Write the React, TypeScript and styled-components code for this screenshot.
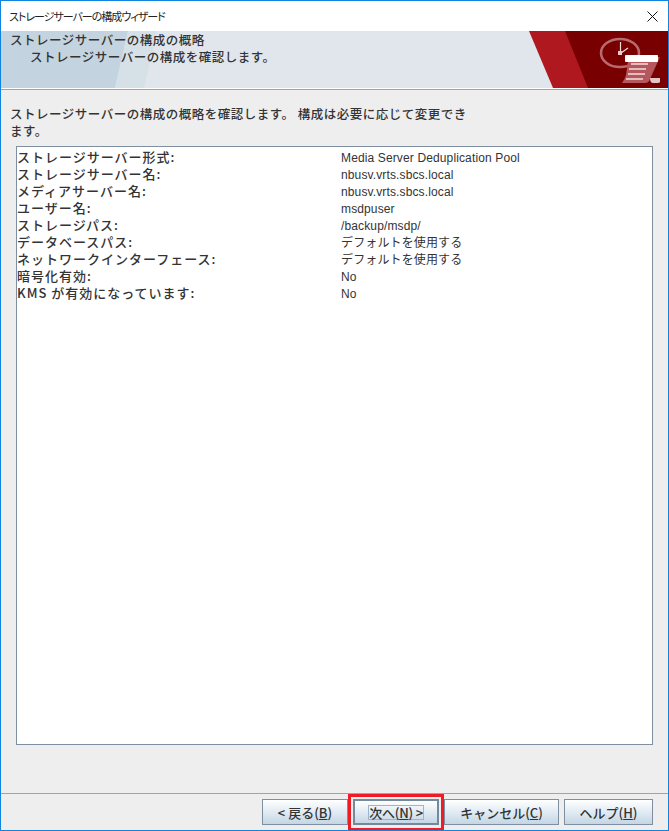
import React from "react";
import styled, { createGlobalStyle } from "styled-components";

const GlobalStyle = createGlobalStyle`
  html, body {
    margin: 0;
    padding: 0;
    background: #eeeeee;
  }
`;

const jp = `"Noto Sans CJK JP", "Noto Sans", sans-serif`;
const latin = `"Liberation Sans", "Noto Sans CJK JP", sans-serif`;

const Window = styled.div`
  width: 669px;
  height: 831px;
  box-sizing: border-box;
  border: 1px solid #0f84e0;
  background: #eeeeee;
  display: flex;
  flex-direction: column;
  overflow: hidden;
  color: #333333;
`;

const TitleBar = styled.div`
  height: 30px;
  flex: none;
  background: #ffffff;
  display: flex;
  align-items: center;
  justify-content: space-between;
  padding: 0 8px;
  box-sizing: border-box;
`;

const TitleText = styled.span`
  font: 400 11px ${jp};
  font-feature-settings: "palt";
  letter-spacing: -1px;
  color: #222222;
`;

const CloseIcon = styled.svg`
  width: 11px;
  height: 11px;
  margin-right: 2px;
  display: block;
`;

const Banner = styled.div`
  position: relative;
  height: 57px;
  flex: none;
  background: #e0e6eb;
  border-bottom: 1px solid #ffffff;
  box-sizing: content-box;
`;

const BannerArt = styled.svg`
  position: absolute;
  inset: 0;
  width: 667px;
  height: 57px;
  display: block;
`;

const BannerText = styled.div`
  position: relative;
  padding: 0 0 0 9px;
  font: 500 12.5px/17px ${jp};
  letter-spacing: 0.5px;
  color: #333333;
`;

const BannerSub = styled.div`
  padding-left: 20px;
`;

const Rule = styled.div`
  height: 1px;
  flex: none;
  background: #a3a3a3;
`;

const Content = styled.div`
  flex: 1;
  min-height: 0;
  display: flex;
  flex-direction: column;
  padding: 15px 15px 48px 15px;
`;

const Intro = styled.p`
  margin: 0 0 7px -6px;
  font: 500 12.5px/17px ${jp};
  letter-spacing: 0.5px;
`;

const SummaryBox = styled.div`
  flex: 1;
  min-height: 0;
  background: #ffffff;
  border: 1px solid #7d8fa1;
  padding-top: 1px;
`;

const Row = styled.div`
  display: grid;
  grid-template-columns: 324px 1fr;
  height: 17px;
  align-items: center;
`;

const Label = styled.span`
  padding-bottom: 2px;
  font: 500 13px/17px ${jp};
  letter-spacing: 1px;
  color: #333333;
`;

const Value = styled.span`
  padding-top: 2px;
  font: 400 12px/17px ${latin};
  letter-spacing: 0.13px;
  color: #333333;
`;

const Footer = styled.div`
  position: relative;
  flex: none;
  height: 31px;
  border-top: 1px solid #a3a3a3;
  display: flex;
  justify-content: flex-end;
  align-items: flex-start;
  gap: 5px;
  padding: 5px 15px 0 0;
  box-sizing: content-box;
`;

const Button = styled.div<{ $w: number; $focused?: boolean }>`
  width: ${(p) => p.$w}px;
  height: 26px;
  box-sizing: border-box;
  border: ${(p) => (p.$focused ? "2px solid #75899c" : "1px solid #7d8fa1")};
  background: linear-gradient(to bottom, #ffffff 0%, #e4edf4 45%, #c4d6e5 100%);
  display: flex;
  align-items: center;
  justify-content: center;
  font: 500 13px/17px ${jp};
  color: #333333;

  u {
    text-underline-offset: 1px;
  }
`;

const FocusRing = styled.span`
  border: 1px solid #9db5cd;
  line-height: 13px;
  letter-spacing: -0.2px;
  display: block;
`;

const Highlight = styled.div`
  position: absolute;
  left: 347px;
  top: 0;
  width: 96px;
  height: 37px;
  box-sizing: border-box;
  border: 3px solid #ee1c25;
  pointer-events: none;
`;

const rows: [string, string][] = [
  ["ストレージサーバー形式:", "Media Server Deduplication Pool"],
  ["ストレージサーバー名:", "nbusv.vrts.sbcs.local"],
  ["メディアサーバー名:", "nbusv.vrts.sbcs.local"],
  ["ユーザー名:", "msdpuser"],
  ["ストレージパス:", "/backup/msdp/"],
  ["データベースパス:", "デフォルトを使用する"],
  ["ネットワークインターフェース:", "デフォルトを使用する"],
  ["暗号化有効:", "No"],
  ["KMS が有効になっています:", "No"],
];

const App = () => {
  return (
    <>
      <GlobalStyle />
      <Window>
        <TitleBar>
          <TitleText>ストレージサーバーの構成ウィザード</TitleText>
          <CloseIcon viewBox="0 0 11 11">
            <path d="M0.5 0.5L10.5 10.5M10.5 0.5L0.5 10.5" stroke="#111111" strokeWidth="1" fill="none" />
          </CloseIcon>
        </TitleBar>
        <Banner>
          <BannerArt viewBox="0 0 667 57">
            <polygon points="0,0 127,0 114,57 0,57" fill="#c3d3df" />
            <polygon points="127,0 156,0 143,57 114,57" fill="#d5e0e7" />
            <polygon points="528,0 667,0 667,57 552,57" fill="#b01820" />
            <polygon points="564,0 667,0 667,57 587,57" fill="#780000" />
            <ellipse cx="619" cy="22" rx="19" ry="14" fill="none" stroke="#b96a6e" strokeWidth="2.5" />
            <path d="M619.5 11V23" stroke="#f0d9d9" strokeWidth="1.2" />
            <path d="M620 22L627 17" stroke="#f0d9d9" strokeWidth="1.2" />
            <rect x="617" y="20" width="4" height="4" fill="#e8cccc" />
            <path d="M627 30L659 26L649 48Q648 52 644 52H621Q624 48 625 44Z" fill="#b5575c" />
            <rect x="624" y="24" width="33" height="7" rx="1" fill="#ffffff" />
            <path d="M630 33H647M628 38H645M627 43H644M625 48H642" stroke="#f3dede" strokeWidth="1.5" />
            <path d="M649 47H659V51Q659 52 656 52H652Q649 52 649 47Z" fill="#e3c5c7" />
          </BannerArt>
          <BannerText>
            ストレージサーバーの構成の概略
            <BannerSub>ストレージサーバーの構成を確認します。</BannerSub>
          </BannerText>
        </Banner>
        <Rule />
        <Content>
          <Intro>
            ストレージサーバーの構成の概略を確認します。 構成は必要に応じて変更でき
            <br />
            ます。
          </Intro>
          <SummaryBox>
            {rows.map(([label, value]) => (
              <Row key={label}>
                <Label>{label}</Label>
                <Value>{value}</Value>
              </Row>
            ))}
          </SummaryBox>
        </Content>
        <Footer>
          <Button $w={86}>
            &lt; 戻る(<u>B</u>)
          </Button>
          <Button $w={86} $focused>
            <FocusRing>
              次へ(<u>N</u>) &gt;
            </FocusRing>
          </Button>
          <Button $w={115}>
            キャンセル(<u>C</u>)
          </Button>
          <Button $w={89}>
            ヘルプ(<u>H</u>)
          </Button>
          <Highlight />
        </Footer>
      </Window>
    </>
  );
};

export default App;
